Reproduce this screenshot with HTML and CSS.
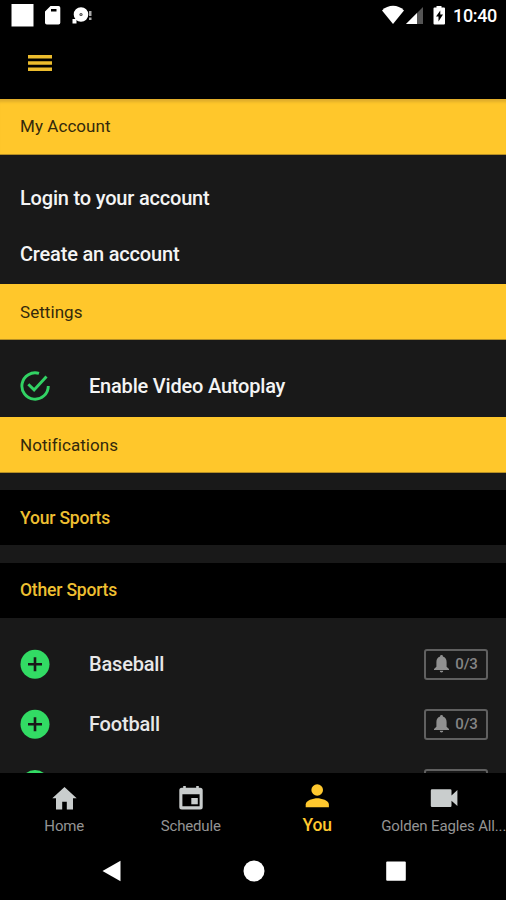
FILE: index.html
```html
<!DOCTYPE html>
<html lang="en">
<head>
<meta charset="utf-8">
<title>My Account</title>
<link rel="stylesheet" href="styles.css">
</head>
<body>
<div class="screen">
  <header class="status">
    <svg class="status-left" width="100" height="32" viewBox="0 0 100 32">
      <path fill="#fff" d="M11.500 4h22v22.500h-22z"/>
      <path fill="#fff" fill-rule="evenodd" d="M50.500 6h8a1.800 1.800 0 0 1 1.800 1.800v15a1.800 1.800 0 0 1-1.800 1.800H46.800a1.800 1.800 0 0 1-1.800-1.800V11.500zM51 9v2.500h5.500V9z"/>
      <circle cx="81" cy="14.500" r="4.400" fill="none" stroke="#fff" stroke-width="5.800"/>
      <circle cx="81" cy="14.500" r="1.200" fill="#888"/>
      <path fill="#fff" d="M72.500 19h4v4.500h-4z"/>
      <path fill="#aaa" d="M89 11h2.500v5H89zM89 17.500h2.500V20H89z"/>
    </svg>
    <svg class="status-right" width="74" height="32" viewBox="0 0 74 32">
      <path fill="#fff" d="M0 10.500C6.200 4.300 16 4.300 22 10.500L11 24z"/>
      <path fill="#555" d="M41 7v17H24z"/>
      <path fill="#fff" d="M35 13v11H24z"/>
      <path fill="#fff" fill-rule="evenodd" d="M54.500 6h5v1.500H62q1 0 1 1V23.500q0 1-1 1H52.500q-1 0-1-1V8.500q0-1 1-1h2zM58.300 10.500l-4.300 6h2.500v5l4.500-7h-2.700z"/>
    </svg>
    <span class="clock">10:40</span>
  </header>
  <div class="toolbar">
    <svg width="24" height="16" viewBox="0 0 24 16"><path fill="#ecbc2d" d="M0 0h24v3.500H0zM0 6.200h24v3.500H0zM0 12.400h24v3.500H0z"/></svg>
  </div>
  <main class="content">
    <h2 class="bar bar-first"><span>My Account</span></h2>
    <div class="links">
      <div class="link"><span>Login to your account</span></div>
      <div class="link"><span>Create an account</span></div>
    </div>
    <h2 class="bar"><span>Settings</span></h2>
    <div class="option">
      <svg class="lead" width="30" height="30" viewBox="0 0 30 30" fill="none" stroke="#32d264" stroke-width="2.900"><path d="M28.300 15A13.200 13.200 0 1 1 19 2.400"/><path d="M8.300 13.200l5.800 5.700L26.500 5.600"/></svg>
      <span>Enable Video Autoplay</span>
    </div>
    <h2 class="bar"><span>Notifications</span></h2>
    <h3 class="group"><span>Your Sports</span></h3>
    <h3 class="group"><span>Other Sports</span></h3>
    <div class="sports">
      <div class="sport">
        <svg class="lead" width="30" height="30" viewBox="0 0 30 30"><circle cx="15" cy="15.300" r="14.500" fill="#32db64"/><path stroke="#191919" stroke-width="2.600" d="M15 8.300v14M8 15.300h14"/></svg>
        <span>Baseball</span>
        <div class="badge"><svg width="15" height="18" viewBox="0 0 15 18"><path fill="#909090" d="M7.500 0a1.400 1.400 0 0 1 1.400 1.600C11.300 2.300 12.600 4.300 12.600 7v4.700L15 14v1H0v-1l2.400-2.300V7c0-2.700 1.300-4.700 3.700-5.400A1.400 1.400 0 0 1 7.500 0zM5.700 15.800h3.600a1.800 1.800 0 0 1-3.600 0z"/></svg><span>0/3</span></div>
      </div>
      <div class="sport">
        <svg class="lead" width="30" height="30" viewBox="0 0 30 30"><circle cx="15" cy="15.300" r="14.500" fill="#32db64"/><path stroke="#191919" stroke-width="2.600" d="M15 8.300v14M8 15.300h14"/></svg>
        <span>Football</span>
        <div class="badge"><svg width="15" height="18" viewBox="0 0 15 18"><path fill="#909090" d="M7.500 0a1.400 1.400 0 0 1 1.400 1.600C11.300 2.300 12.600 4.300 12.600 7v4.700L15 14v1H0v-1l2.400-2.300V7c0-2.700 1.300-4.700 3.700-5.400A1.400 1.400 0 0 1 7.500 0zM5.700 15.800h3.600a1.800 1.800 0 0 1-3.600 0z"/></svg><span>0/3</span></div>
      </div>
      <div class="sport">
        <svg class="lead" width="30" height="30" viewBox="0 0 30 30"><circle cx="15" cy="15.500" r="14.500" fill="#32db64"/></svg>
        <div class="badge"></div>
      </div>
    </div>
  </main>
  <nav class="tabs">
    <div class="tab">
      <svg width="30" height="28" viewBox="0 0 30 28"><path fill="#c9cdcd" d="M15.500 3L3.300 14.200H7v11.300h6.200v-7.800h4.600v7.800H24V14.200h3.700z"/></svg>
      <span>Home</span>
    </div>
    <div class="tab">
      <svg width="30" height="28" viewBox="0 0 30 28"><path fill="#c9cdcd" fill-rule="evenodd" d="M7.200 2h2.600v1.800h10.400V2h2.600v1.800h1.400a2.500 2.500 0 0 1 2.500 2.500V23a2.500 2.500 0 0 1-2.500 2.500H5.800A2.500 2.500 0 0 1 3.300 23V6.300a2.500 2.500 0 0 1 2.500-2.500h1.400zM6.400 10.200v12h17.200v-12z"/><path fill="#c9cdcd" d="M15.300 14h6.500v6.300h-6.500z"/></svg>
      <span>Schedule</span>
    </div>
    <div class="tab tab-active">
      <svg width="30" height="28" viewBox="0 0 30 28"><circle cx="15.200" cy="6" r="5.800" fill="#ffc82e"/><path fill="#ffc82e" d="M3.700 23.300v-2.900c0-4 7.700-6.100 11.600-6.100s11.600 2.100 11.600 6.100v2.900z"/></svg>
      <span>You</span>
    </div>
    <div class="tab">
      <svg width="30" height="28" viewBox="0 0 30 28"><path fill="#c9cdcd" d="M3 5.300h18.300a1.200 1.200 0 0 1 1.200 1.200v5l5.900-5.500v16l-5.900-5.300v5a1.200 1.200 0 0 1-1.200 1.200H3A1.200 1.200 0 0 1 1.800 21.700V6.500A1.200 1.200 0 0 1 3 5.300z"/></svg>
      <span>Golden Eagles All...</span>
    </div>
  </nav>
  <div class="system">
    <svg width="22" height="22" viewBox="0 0 22 22"><path fill="#fff" d="M19.500.7v20.600L1.500 11z"/></svg>
    <svg width="22" height="22" viewBox="0 0 22 22"><circle cx="11" cy="11" r="10.500" fill="#fff"/></svg>
    <svg width="22" height="22" viewBox="0 0 22 22"><rect x="1.200" y="1.500" width="19.600" height="19.300" rx="1" fill="#fff"/></svg>
  </div>
</div>
</body>
</html>
```

FILE: styles.css
```css
* { box-sizing: border-box; }
body { margin: 0; background: #000; font-family: Roboto, "Liberation Sans", sans-serif; }
svg { display: block; flex: none; }
span { white-space: nowrap; }
.screen { width: 506px; height: 900px; display: flex; flex-direction: column; overflow: hidden; background: #000; }
.status { height: 32px; flex: none; display: flex; align-items: center; color: #fff; }
.status-right { margin-left: auto; }
.clock { width: 53px; margin-left: -3px; font-size: 18px; font-weight: 500; line-height: 32px; letter-spacing: -0.350px; }
.toolbar { height: 67px; flex: none; padding: 23px 28px; }
.content { height: 674px; flex: none; overflow: hidden; background: #191919; color: #f4f4f4; }
.bar { display: flex; align-items: center; height: 56px; margin: 0; padding: 0 20px; background: #ffc72b; border-bottom: 1px solid #b58e25; color: #34290b; font-size: 17px; font-weight: 400; letter-spacing: 0.060px; }
.bar-first { padding-bottom: 2px; box-shadow: inset 0 5px 3px -2px #e0ad2a; }
.links { height: 129px; padding-top: 15px; }
.link { display: flex; align-items: center; height: 56px; padding-left: 20px; font-size: 20px; font-weight: 500; letter-spacing: -0.190px; }
.option { display: flex; align-items: center; height: 77px; padding: 15px 20px 0; font-size: 20px; font-weight: 500; letter-spacing: -0.200px; }
.lead { margin-right: 39px; }
.group { display: flex; align-items: center; height: 55px; margin: 17px 0 0; padding: 0 20px; background: #000; color: #eebf31; font-size: 17.500px; font-weight: 500; letter-spacing: -0.190px; }
.group + .group { margin-top: 18px; padding-bottom: 1px; }
.sports { padding-top: 16px; }
.sport { display: flex; align-items: center; height: 60px; padding: 0 18px 0 20px; font-size: 20px; font-weight: 500; letter-spacing: -0.190px; color: #e8e8e8; }
.badge { display: flex; align-items: center; justify-content: center; gap: 6px; width: 64px; height: 31px; margin-left: auto; border: 2px solid #606060; border-radius: 3px; color: #858585; font-size: 15px; }
.badge span { margin-top: -1px; }
.tabs { display: grid; grid-template-columns: repeat(4, 126.500px); height: 69px; flex: none; padding-left: 1px; color: #949494; }
.tab { display: flex; flex-direction: column; align-items: center; padding-top: 11px; font-size: 15px; letter-spacing: -0.150px; }
.tab span { line-height: 20px; margin-top: 4px; }
.tab-active { color: #ffc82e; font-size: 17.500px; font-weight: 500; }
.tab-active span { margin-top: 3px; }
.system { display: flex; align-items: center; justify-content: space-between; height: 58px; padding: 0 99px 0 101px; }
```
